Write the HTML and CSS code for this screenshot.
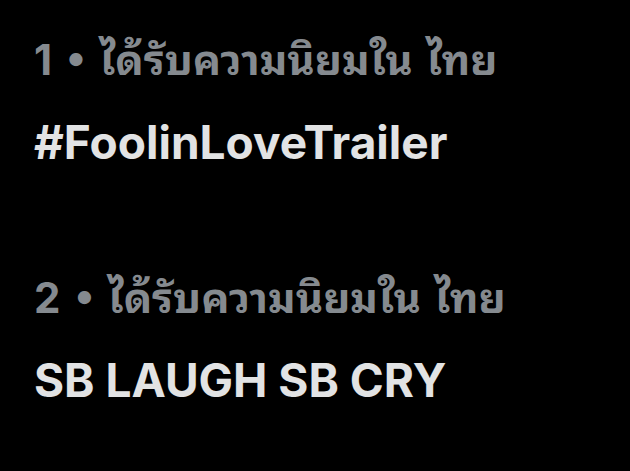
FILE: index.html
```html
<!DOCTYPE html>
<html>
  <head>
    <title>trends</title>
    <link rel="stylesheet" href="styles.css">
  </head>

  <body>
    <div id="trends">
      <div class="trend">
        <p class="meta">1 • ได้รับความนิยมใน ไทย</p>
        <p class="name">#FoolinLoveTrailer</p>
      </div>
      <div class="trend">
        <p class="meta">2 • ได้รับความนิยมใน ไทย</p>
        <p class="name">SB LAUGH SB CRY</p>
      </div>
    </div>
  </body>
</html>
```

FILE: styles.css
```css
body {
  margin: 0px;
  background-color: black;
  font-family: Inter, "Liberation Sans", "Noto Sans", sans-serif;
  overflow: hidden;
}

#trends {
  display: flex;
  flex-direction: column;
  gap: 100px;
  padding: 32px 0px 0px 34px;
}

.trend {
  display: flex;
  flex-direction: column;
  gap: 26px;
}

.meta {
  margin: 0px;
  color: #858a8f;
  font-family: Inter, "Noto Sans Thai Looped", "Noto Looped Thai", "Noto Sans Thai", sans-serif;
  font-size: 42px;
  font-weight: bold;
  line-height: 56px;
  word-spacing: 4px;
  white-space: nowrap;
}

.name {
  margin: 0px;
  color: #e2e3e4;
  font-size: 46px;
  font-weight: bold;
  line-height: 56px;
  white-space: nowrap;
}
```
